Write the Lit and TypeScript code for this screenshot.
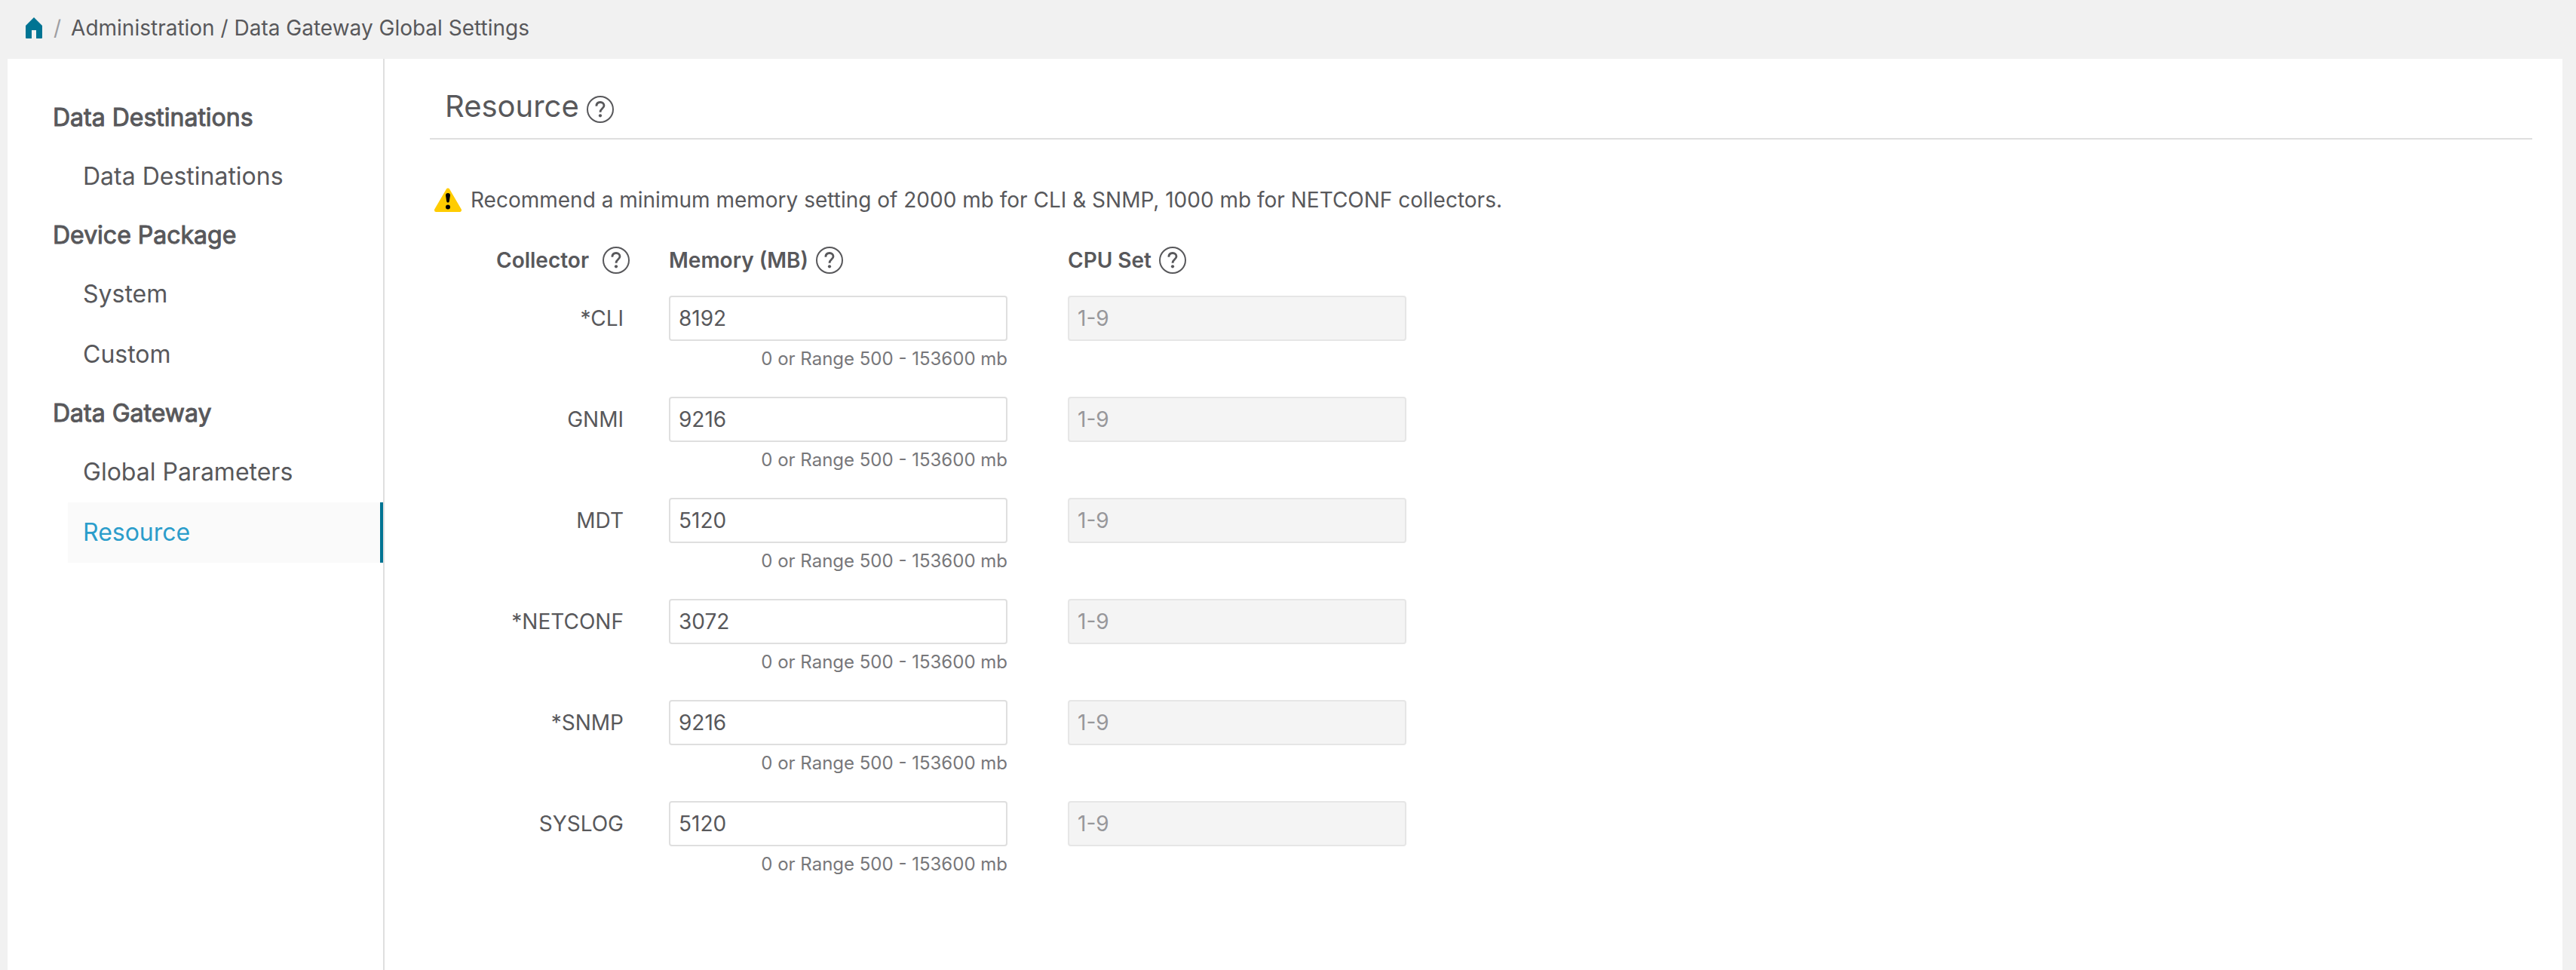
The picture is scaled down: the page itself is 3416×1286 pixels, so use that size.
import { LitElement, html, css, svg } from "lit";
import { customElement } from "lit/decorators.js";
import { classMap } from "lit/directives/class-map.js";

interface NavItem { label: string; active?: boolean }
interface NavGroup { title: string; items: NavItem[] }
interface Collector { name: string; memory: string; cpu: string }

const NAV: NavGroup[] = [
  { title: "Data Destinations", items: [{ label: "Data Destinations" }] },
  { title: "Device Package", items: [{ label: "System" }, { label: "Custom" }] },
  { title: "Data Gateway", items: [{ label: "Global Parameters" }, { label: "Resource", active: true }] },
];

const COLLECTORS: Collector[] = [
  { name: "*CLI", memory: "8192", cpu: "1-9" },
  { name: "GNMI", memory: "9216", cpu: "1-9" },
  { name: "MDT", memory: "5120", cpu: "1-9" },
  { name: "*NETCONF", memory: "3072", cpu: "1-9" },
  { name: "*SNMP", memory: "9216", cpu: "1-9" },
  { name: "SYSLOG", memory: "5120", cpu: "1-9" },
];

const questionMark = svg`
  <circle cx="18" cy="18" r="17" fill="none" stroke="currentColor" stroke-width="2"></circle>
  <path d="M12.9 13.8C12.9 10.4 15 8.5 18 8.5S23 10.4 23 13.1C23 17 18 16.6 18 21.8" fill="none" stroke="currentColor" stroke-width="2.8"></path>
  <circle cx="18" cy="26.3" r="2.1" fill="currentColor"></circle>`;

@customElement("help-button")
export class HelpButton extends LitElement {
  static properties = { topic: { type: String } };
  declare topic: string;

  static styles = css`
    :host { display: inline-flex; }
    .help { display: flex; padding: 0; border: 0; background: none; color: inherit; cursor: pointer; }
    .icon { width: 36px; height: 36px; }
  `;

  render() {
    return html`<button class="help" type="button" aria-label="Help: ${this.topic}">
      <svg class="icon" viewBox="0 0 36 36" aria-hidden="true">${questionMark}</svg>
    </button>`;
  }
}

@customElement("app-root")
export class AppRoot extends LitElement {
  static styles = css`
    :host {
      display: flex;
      flex-direction: column;
      box-sizing: border-box;
      min-height: 100vh;
      background: #f1f1f1;
      color: #58585b;
      font-family: Inter, "Liberation Sans", sans-serif;
      font-size: 28px;
      line-height: 36px;
    }
    *, *::before, *::after { box-sizing: border-box; }
    a { color: inherit; text-decoration: none; }

    .breadcrumb { display: flex; align-items: center; gap: 13px; padding: 19px 32px 23px; }
    .home { display: flex; color: #007493; padding: 2px; }
    .home-icon { width: 22px; height: 28px; }
    .divider { color: #9e9ea2; }

    .panel { flex: 1; display: flex; margin: 0 18px 0 10px; background: #fff; }

    .sidebar { flex: none; width: 500px; padding: 40px 0; border-right: 2px solid #dfdfdf; font-size: 32px; }
    .group-title {
      margin: 0;
      padding: 20px 60px;
      font-size: 32px;
      font-weight: 400;
      -webkit-text-stroke: 1px currentColor;
    }
    .group-items { list-style: none; margin: 0; padding: 0 0 0 80px; }
    .nav-link { display: block; padding: 22px 20px; }
    .nav-link.active { background: #fafafa; color: #2b9dcb; border-right: 4px solid #007493; }

    .content { flex: 1; min-width: 0; padding: 40px 40px 40px 60px; }
    .title-bar { display: flex; align-items: center; gap: 10px; padding: 0 20px 19px; border-bottom: 2px solid #dfdfdf; }
    .title { margin: 0; font-size: 40px; line-height: 46px; font-weight: 400; }
    .title-bar help-button { padding-top: 8px; }

    .notice { display: flex; align-items: center; gap: 12px; margin: 62px 0 0; padding-left: 6px; }
    .warning-icon { flex: none; width: 36px; height: 32px; }

    .collectors { margin-top: 44px; border-collapse: collapse; }
    .collectors th, .collectors td { padding: 0; text-align: left; vertical-align: top; font-weight: 400; }
    .collectors thead th { font-weight: 600; }
    .column-name { width: 317px; }
    .column-memory { width: 529px; }
    .column-cpu { width: 449px; }
    .heading { display: flex; align-items: center; gap: 10px; height: 65px; padding-bottom: 29px; }
    .heading.end { justify-content: flex-end; gap: 18px; padding-right: 52px; }
    .row-name { display: block; padding: 12px 60px 12px 0; text-align: right; }
    .field { width: 449px; height: 134px; }
    .input {
      display: block;
      width: 100%;
      height: 60px;
      padding: 0 11px;
      border: 2px solid #dfdfdf;
      border-radius: 4px;
      background: #fff;
      color: inherit;
      font: inherit;
    }
    .input:disabled { background: #f4f4f4; border-color: #e6e6e6; color: #97979a; }
    .hint { margin: 0; padding-top: 6px; font-size: 24px; color: #77777a; text-align: right; }
  `;

  private renderGroup(group: NavGroup) {
    return html`
      <h2 class="group-title">${group.title}</h2>
      <ul class="group-items">
        ${group.items.map((item) => html`
          <li><a class=${classMap({ "nav-link": true, active: !!item.active })} href="#">${item.label}</a></li>`)}
      </ul>`;
  }

  private renderRow(row: Collector, index: number) {
    return html`
      <tr>
        <th scope="row"><label class="row-name" for="memory-${index}">${row.name}</label></th>
        <td>
          <div class="field">
            <input class="input" id="memory-${index}" type="text" inputmode="numeric" aria-describedby="hint-${index}" .value=${row.memory}>
            <p class="hint" id="hint-${index}">0 or Range 500 - 153600 mb</p>
          </div>
        </td>
        <td><input class="input" type="text" aria-label="CPU Set" disabled .value=${row.cpu}></td>
      </tr>`;
  }

  render() {
    return html`
      <nav class="breadcrumb" aria-label="Breadcrumb">
        <a class="home" href="#" aria-label="Home">
          <svg class="home-icon" viewBox="0 0 22 28" aria-hidden="true">
            <path d="M11 0L22 11V27Q22 28 21 28H14V17H8V28H1Q0 28 0 27V11Z" fill="currentColor"></path>
          </svg>
        </a>
        <span class="divider">/</span>
        <span>Administration / Data Gateway Global Settings</span>
      </nav>
      <div class="panel">
        <nav class="sidebar" aria-label="Settings">${NAV.map((group) => this.renderGroup(group))}</nav>
        <main class="content">
          <header class="title-bar">
            <h1 class="title">Resource</h1>
            <help-button topic="Resource"></help-button>
          </header>
          <p class="notice">
            <svg class="warning-icon" viewBox="0 0 36 32" aria-hidden="true">
              <path d="M18 3L33.5 29.5H2.5Z" fill="#ffcc00" stroke="#ffcc00" stroke-width="5" stroke-linejoin="round"></path>
              <path d="M15 10Q15 7 18 7T21 10L19.8 18Q19.5 19.6 18 19.6T16.2 18Z" fill="#000"></path>
              <circle cx="18" cy="25.4" r="3" fill="#000"></circle>
            </svg>
            <span>Recommend a minimum memory setting of 2000 mb for CLI &amp; SNMP, 1000 mb for NETCONF collectors.</span>
          </p>
          <table class="collectors">
            <thead>
              <tr>
                <th class="column-name" scope="col"><div class="heading end">Collector <help-button topic="Collector"></help-button></div></th>
                <th class="column-memory" scope="col"><div class="heading">Memory (MB) <help-button topic="Memory"></help-button></div></th>
                <th class="column-cpu" scope="col"><div class="heading">CPU Set <help-button topic="CPU Set"></help-button></div></th>
              </tr>
            </thead>
            <tbody>${COLLECTORS.map((row, index) => this.renderRow(row, index))}</tbody>
          </table>
        </main>
      </div>`;
  }
}
